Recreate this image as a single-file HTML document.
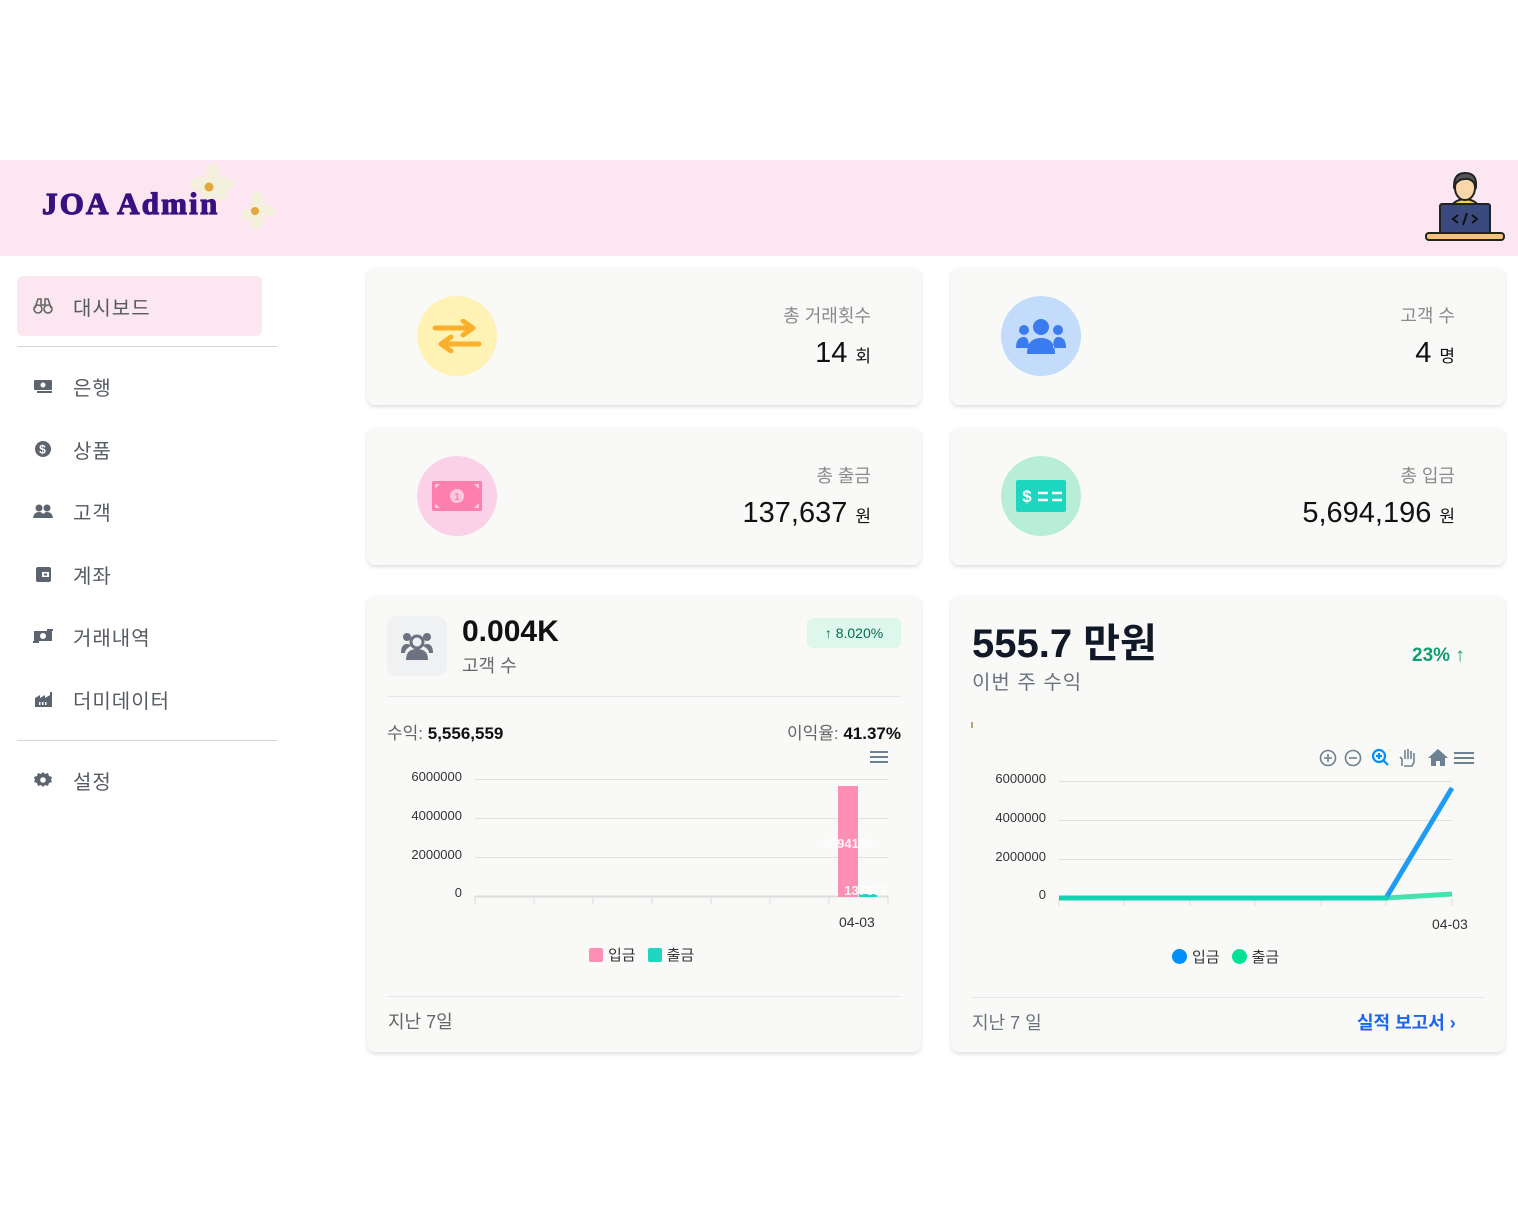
<!DOCTYPE html>
<html><head><meta charset="utf-8"><style>
*{margin:0;padding:0;box-sizing:border-box}
body{width:1518px;height:1222px;background:#fff;font-family:"Liberation Sans","Noto Sans CJK KR",sans-serif;position:relative;overflow:hidden;color:#111}
.abs{position:absolute}
.hdr{left:0;top:160px;width:1518px;height:96px;background:#fbe6f2}
.logo{left:42px;top:186px;font-family:"Liberation Serif",serif;font-weight:bold;font-size:31px;color:#3a1080;letter-spacing:2.2px;-webkit-text-stroke:1.2px #3a1080;z-index:2}
.nav{left:17px;width:245px;height:60px;display:flex;align-items:center;font-size:20px;letter-spacing:1px;color:#555a63}
.nav svg{margin-left:16px;margin-right:20px}
.div{left:17px;width:260px;height:1px;background:#cfd6de}
.card{background:#f9f9f8;border-radius:8px;box-shadow:0 2px 4px rgba(0,0,0,.13)}
.circ{width:80px;height:80px;border-radius:50%;display:flex;align-items:center;justify-content:center}
.lbl{font-size:18px;color:#8a8a8a;text-align:right}
.val{font-size:29px;color:#111;text-align:right}
.val small{font-size:17px;margin-left:8px}
.ax{font-size:13px;color:#333;text-align:right;width:80px}
</style></head><body>
<div class="abs hdr"></div>
<svg class="abs" style="left:185px;top:163px" width="90" height="72">
<g fill="#f3f0dc"><ellipse cx="28" cy="11" rx="7" ry="10"/><ellipse cx="39" cy="21" rx="10" ry="7"/><ellipse cx="15" cy="21" rx="9" ry="7"/><ellipse cx="22" cy="33" rx="6" ry="9"/><ellipse cx="36" cy="31" rx="7" ry="6"/><ellipse cx="72" cy="38" rx="6" ry="9"/><ellipse cx="82" cy="48" rx="8" ry="6"/><ellipse cx="72" cy="58" rx="6" ry="8"/><ellipse cx="62" cy="52" rx="5" ry="6"/></g>
<circle cx="24" cy="24" r="4.5" fill="#e0a93a"/><circle cx="70" cy="48" r="4" fill="#e0a93a"/></svg>
<div class="abs logo">JOA Admin</div>
<svg class="abs" style="left:1424px;top:170px" width="84" height="74">
<path d="M26 40 Q28 30 41 29 Q54 30 56 40Z" fill="#f2d34a" stroke="#222" stroke-width="2"/>
<ellipse cx="41" cy="18" rx="10" ry="12" fill="#fad7a8" stroke="#222" stroke-width="2"/>
<path d="M30 16 Q30 3 41 3 Q53 3 52 16 Q48 8 41 9 Q34 9 30 16Z" fill="#555" stroke="#222" stroke-width="2"/>
<rect x="16" y="34" width="50" height="30" rx="2" fill="#3b4a7e" stroke="#222" stroke-width="2"/>
<path d="M34 45 l-5 4 5 4 M48 45 l5 4 -5 4 M43 43 l-4 12" stroke="#111" stroke-width="2" fill="none"/>
<rect x="2" y="63" width="78" height="7" rx="3" fill="#f7c27a" stroke="#222" stroke-width="2"/></svg>

<div class="abs nav" style="top:276px;background:#fce6f0;border-radius:6px"><svg width="20" height="18" viewBox="0 0 20 18" fill="none" stroke="#666" stroke-width="1.6"><circle cx="5" cy="12" r="4"/><circle cx="15" cy="12" r="4"/><path d="M2 11 L5 2 H8 V8 M18 11 L15 2 H12 V8 M8 8 H12"/></svg>대시보드</div>
<div class="abs div" style="top:346px"></div>
<div class="abs nav" style="top:356px"><svg width="20" height="16"><rect x="1" y="2" width="18" height="10" rx="1" fill="#5c6470"/><circle cx="10" cy="7" r="2.5" fill="#fff"/><rect x="4" y="13" width="15" height="2" fill="#5c6470"/></svg>은행</div>
<div class="abs nav" style="top:419px"><svg width="20" height="18"><circle cx="10" cy="9" r="8" fill="#5c6470"/><text x="10" y="13.5" font-size="12" font-weight="bold" fill="#fff" text-anchor="middle">$</text></svg>상품</div>
<div class="abs nav" style="top:481px"><svg width="20" height="16"><circle cx="6" cy="5" r="3.5" fill="#5c6470"/><circle cx="14" cy="5" r="3.5" fill="#5c6470"/><path d="M0 15 Q1 9 6 9 Q11 9 11 15Z M9 15 Q10 9 14 9 Q19 9 20 15Z" fill="#5c6470"/></svg>고객</div>
<div class="abs nav" style="top:544px"><svg width="20" height="18"><rect x="3" y="2" width="15" height="15" rx="2" fill="#5c6470"/><rect x="9" y="7" width="7" height="5" fill="#fff"/><rect x="11" y="8.5" width="3" height="2" fill="#5c6470"/></svg>계좌</div>
<div class="abs nav" style="top:606px"><svg width="20" height="16"><rect x="1" y="3" width="18" height="10" fill="#5c6470"/><circle cx="10" cy="8" r="3" fill="#fff"/><path d="M0 14 H6 M14 2 H20" stroke="#5c6470" stroke-width="2"/></svg>거래내역</div>
<div class="abs nav" style="top:669px"><svg width="20" height="18"><path d="M2 17 V8 L7 5 V8 L12 5 V8 L17 5 V2 H19 V17Z" fill="#5c6470"/><rect x="6" y="12" width="1.5" height="3" fill="#fff"/><rect x="9" y="12" width="1.5" height="3" fill="#fff"/><rect x="12" y="12" width="1.5" height="3" fill="#fff"/></svg>더미데이터</div>
<div class="abs div" style="top:740px"></div>
<div class="abs nav" style="top:750px"><svg width="20" height="18" viewBox="0 0 20 18"><path d="M10 1 l2 2 3-1 1 3 3 1-1 3 1 2-3 1-1 3-3-1-2 2-2-2-3 1-1-3-3-1 1-2-1-3 3-1 1-3 3 1z" fill="#5c6470"/><circle cx="10" cy="9" r="2.8" fill="#fff"/></svg>설정</div>

<div class="abs card" style="left:367px;top:267px;width:554px;height:138px"></div>
<div class="abs circ" style="left:417px;top:296px;background:#fef2b4"><svg width="52" height="34"><path d="M4 9 H40 M32 2 L42 9 32 16 M48 25 H12 M20 18 L10 25 20 32" stroke="#fbb02d" stroke-width="5" fill="none" stroke-linecap="round" stroke-linejoin="round"/></svg></div>
<div class="abs lbl" style="left:620px;top:302px;width:251px">총 거래횟수</div>
<div class="abs val" style="left:620px;top:337px;width:251px">14<small>회</small></div>

<div class="abs card" style="left:951px;top:267px;width:554px;height:138px"></div>
<div class="abs circ" style="left:1001px;top:296px;background:#c3dcfb"><svg width="52" height="36"><circle cx="26" cy="9" r="8" fill="#3b7bf0"/><circle cx="9" cy="12" r="5" fill="#3b7bf0"/><circle cx="43" cy="12" r="5" fill="#3b7bf0"/><path d="M12 36 Q12 20 26 20 Q40 20 40 36Z M1 30 Q1 19 9 19 Q14 19 14 30Z M51 30 Q51 19 43 19 Q38 19 38 30Z" fill="#3b7bf0"/></svg></div>
<div class="abs lbl" style="left:1200px;top:302px;width:255px">고객 수</div>
<div class="abs val" style="left:1200px;top:337px;width:255px">4<small>명</small></div>

<div class="abs card" style="left:367px;top:427px;width:554px;height:138px"></div>
<div class="abs circ" style="left:417px;top:456px;background:#fbd1e8"><svg width="52" height="32"><rect x="1" y="1" width="50" height="30" rx="2" fill="#fc7fae"/><circle cx="26" cy="16" r="7" fill="#fdc8dc"/><text x="26" y="20" font-size="10" font-weight="bold" fill="#fc7fae" text-anchor="middle">1</text><path d="M4 4h5l-5 5zM48 4h-5l5 5zM4 28h5l-5-5zM48 28h-5l5-5z" fill="#fdc8dc"/></svg></div>
<div class="abs lbl" style="left:620px;top:462px;width:251px">총 출금</div>
<div class="abs val" style="left:620px;top:497px;width:251px">137,637<small>원</small></div>

<div class="abs card" style="left:951px;top:427px;width:554px;height:138px"></div>
<div class="abs circ" style="left:1001px;top:456px;background:#b8eed8"><svg width="52" height="34"><rect x="1" y="1" width="50" height="32" rx="2" fill="#1ed6c0"/><text x="12" y="23" font-size="17" font-weight="bold" fill="#fff" text-anchor="middle">$</text><path d="M23 14h10M37 14h10M23 21h10M37 21h10" stroke="#fff" stroke-width="2.5"/></svg></div>
<div class="abs lbl" style="left:1200px;top:462px;width:255px">총 입금</div>
<div class="abs val" style="left:1200px;top:497px;width:255px">5,694,196<small>원</small></div>

<div class="abs card" style="left:367px;top:595px;width:554px;height:457px"></div>
<div class="abs" style="left:387px;top:616px;width:60px;height:60px;border-radius:10px;background:#f0f1f3;display:flex;align-items:center;justify-content:center"><svg width="32" height="30"><circle cx="16" cy="11" r="6" fill="none" stroke="#6b7280" stroke-width="3"/><circle cx="6" cy="6" r="4" fill="#6b7280"/><circle cx="26" cy="6" r="4" fill="#6b7280"/><path d="M5 29 Q5 18 16 18 Q27 18 27 29Z M0 22 Q0 13 6 13 Q9 13 10 15 Q4 18 4 22Z M32 22 Q32 13 26 13 Q23 13 22 15 Q28 18 28 22Z" fill="#6b7280"/></svg></div>
<div class="abs" style="left:462px;top:615px;font-size:30px;font-weight:bold">0.004K</div>
<div class="abs" style="left:462px;top:652px;font-size:18px;color:#666">고객 수</div>
<div class="abs" style="left:807px;top:618px;width:94px;height:30px;border-radius:6px;background:#def7ec;font-size:14px;color:#046c4e;display:flex;align-items:center;justify-content:center">↑ 8.020%</div>
<div class="abs" style="left:387px;top:696px;width:514px;height:1px;background:#e5e7eb"></div>
<div class="abs" style="left:387px;top:719px;font-size:17px;color:#666">수익: <b style="color:#111">5,556,559</b></div>
<div class="abs" style="left:700px;top:719px;width:201px;text-align:right;font-size:17px;color:#666">이익율: <b style="color:#111">41.37%</b></div>
<svg class="abs" style="left:868px;top:749px" width="22" height="16"><path d="M2 3h18M2 8h18M2 13h18" stroke="#6e8192" stroke-width="2"/></svg>
<div class="abs ax" style="left:382px;top:769px">6000000</div>
<div class="abs ax" style="left:382px;top:808px">4000000</div>
<div class="abs ax" style="left:382px;top:847px">2000000</div>
<div class="abs ax" style="left:382px;top:885px">0</div>
<svg class="abs" style="left:470px;top:770px" width="430" height="140">
<g stroke="#e0e0e0"><path d="M5 9.5h413M5 48.5h413M5 87.5h413"/></g>
<path d="M5 126.5h413" stroke="#ddd" stroke-width="2"/>
<g stroke="#ddd"><path d="M5 126v8M64 126v8M123 126v8M182 126v8M241 126v8M300 126v8M359 126v8M418 126v8"/></g>
<rect x="368" y="16" width="20" height="111" fill="#fd8fb5"/>
<rect x="389" y="124" width="18" height="3" fill="#1ed6c0"/>
<text x="378" y="78" font-size="13" font-weight="bold" fill="#fff" text-anchor="middle" opacity=".9">5694196</text>
<text x="396" y="125" font-size="13" font-weight="bold" fill="#fff" text-anchor="middle" opacity=".9">137637</text>
</svg>
<div class="abs" style="left:839px;top:914px;font-size:14px;color:#333">04-03</div>
<div class="abs" style="left:589px;top:944px;font-size:15px;color:#333;display:flex;align-items:center"><span style="width:14px;height:14px;background:#fd8fb5;border-radius:2px;margin-right:5px"></span>입금<span style="width:14px;height:14px;background:#1ed6c0;border-radius:2px;margin:0 5px 0 12px"></span>출금</div>
<div class="abs" style="left:387px;top:996px;width:514px;height:1px;background:#e5e7eb"></div>
<div class="abs" style="left:388px;top:1008px;font-size:18px;color:#666">지난 7일</div>

<div class="abs card" style="left:951px;top:595px;width:554px;height:457px"></div>
<div class="abs" style="left:972px;top:611px;font-size:40px;font-weight:bold;color:#111827">555.7 만원</div>
<div class="abs" style="left:972px;top:666px;font-size:20px;color:#6b7280;letter-spacing:1px">이번 주 수익</div>
<div class="abs" style="left:1412px;top:645px;font-size:19px;font-weight:bold;color:#0e9f6e">23% ↑</div>
<svg class="abs" style="left:1318px;top:746px" width="158" height="24">
<g fill="none" stroke="#6e8192" stroke-width="1.6"><circle cx="10" cy="12" r="7.5"/><path d="M6 12h8M10 8v8"/><circle cx="35" cy="12" r="7.5"/><path d="M31 12h8"/></g>
<g fill="none" stroke="#008ffb" stroke-width="2.2"><circle cx="61" cy="10" r="6"/><path d="M65 14l5 5M58 10h6M61 7v6"/></g>
<path d="M84 20v-7l-2-2M86 20h8l2-4v-9M87 13V4M90 13V3M93 13V5" fill="none" stroke="#6e8192" stroke-width="1.6"/>
<path d="M110 12l10-9 10 9h-3v8h-5v-5h-4v5h-5v-8z" fill="#6e8192"/>
<path d="M136 7h20M136 12h20M136 17h20" stroke="#6e8192" stroke-width="2"/></svg>
<div class="abs" style="left:971px;top:722px;width:2px;height:6px;background:#c0a070"></div>
<div class="abs ax" style="left:966px;top:771px">6000000</div>
<div class="abs ax" style="left:966px;top:810px">4000000</div>
<div class="abs ax" style="left:966px;top:849px">2000000</div>
<div class="abs ax" style="left:966px;top:887px">0</div>
<svg class="abs" style="left:1055px;top:770px" width="410" height="140">
<g stroke="#e0e0e0"><path d="M4 11.5h393M4 50.5h393M4 89.5h393"/></g>
<g stroke="#ddd"><path d="M4 128v8M69 128v8M135 128v8M200 128v8M266 128v8M331 128v8M397 128v8"/></g>
<path d="M4 128 H331 L397 124" stroke="#22e0a0" stroke-width="5" fill="none" opacity=".85"/>
<path d="M331 128 L397 18" stroke="#1e9bf5" stroke-width="5" fill="none"/>
<path d="M4 128 H333" stroke="#14d1b0" stroke-width="5"/>
</svg>
<div class="abs" style="left:1432px;top:916px;font-size:14px;color:#333">04-03</div>
<div class="abs" style="left:1172px;top:946px;font-size:15px;color:#333;display:flex;align-items:center"><span style="width:15px;height:15px;background:#008ffb;border-radius:50%;margin-right:5px"></span>입금<span style="width:15px;height:15px;background:#00e396;border-radius:50%;margin:0 5px 0 12px"></span>출금</div>
<div class="abs" style="left:971px;top:997px;width:514px;height:1px;background:#e5e7eb"></div>
<div class="abs" style="left:972px;top:1009px;font-size:18px;color:#6b7280">지난 7 일</div>
<div class="abs" style="left:1357px;top:1009px;font-size:18px;font-weight:bold;color:#1c64f2">실적 보고서 ›</div>
</body></html>
